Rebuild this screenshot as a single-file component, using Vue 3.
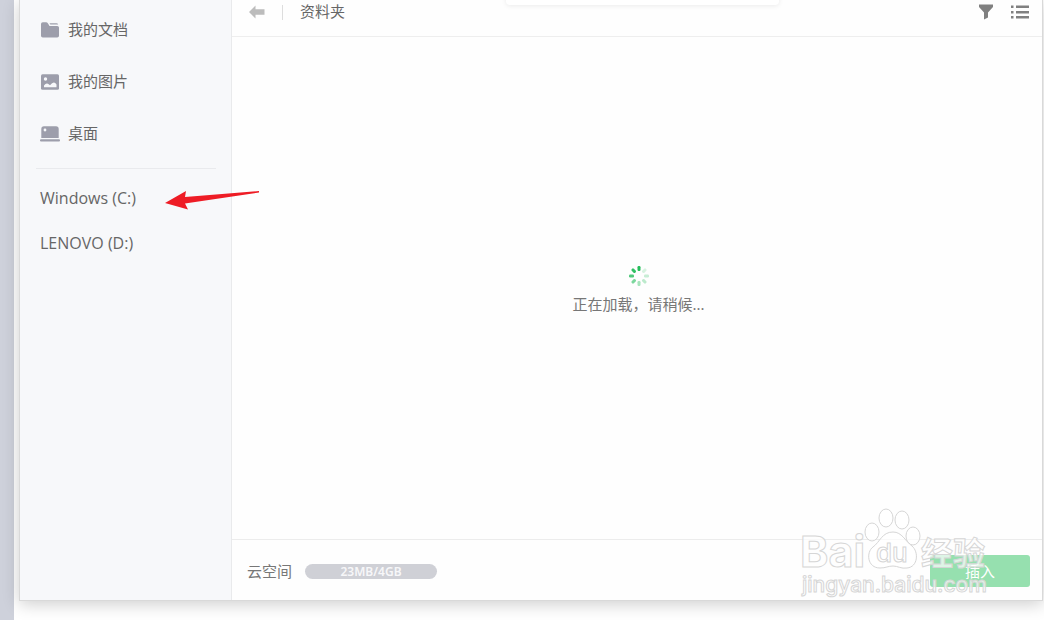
<script setup>
const folders = [
  { name: '我的文档', icon: 'folder' },
  { name: '我的图片', icon: 'picture' },
  { name: '桌面', icon: 'desktop' },
]
const drives = ['Windows (C:)', 'LENOVO (D:)']
const spokes = [1, 0.18, 0.25, 0.3, 0.4, 0.6, 0.8, 0.95]
</script>

<template>
  <div class="page">
    <div class="strip"></div>
    <div class="dialog">
      <nav class="sidebar">
        <button v-for="f in folders" :key="f.name" class="folder" type="button">
          <svg v-if="f.icon === 'folder'" width="20" height="20" viewBox="0 0 20 20" fill="#9d9eab">
            <path d="M1 4Q1 2.300 2.800 2.300H6Q7.200 2.300 8 3.500L9.500 6H17.200Q19 6 19 7.500V15.800Q19 17.500 17.200 17.500H2.800Q1 17.500 1 15.800Z" />
            <path d="M9.500 3.300H16.500Q17.800 3.300 18.200 4.600H10.300Z" />
          </svg>
          <svg v-else-if="f.icon === 'picture'" width="20" height="20" viewBox="0 0 20 20">
            <rect x="1" y="2.300" width="18" height="15.500" rx="1.500" fill="#9d9eab" />
            <circle cx="5.500" cy="7" r="1.700" fill="#f7f8fa" />
            <path d="M4 15.200V13.500Q6.500 10 9 12.500L10 13.200Q14 8 16.500 12.500V15.200Z" fill="#f7f8fa" />
          </svg>
          <svg v-else width="20" height="20" viewBox="0 0 20 20">
            <path d="M1.300 14V5Q1.300 2.300 4 2.300H16Q18.700 2.300 18.700 5V14Z" fill="#9d9eab" />
            <rect y="15.200" width="20" height="2.300" rx="1" fill="#9d9eab" />
            <circle cx="5" cy="6" r="1.400" fill="#f7f8fa" />
          </svg>
          <span class="folder-name">{{ f.name }}</span>
        </button>
        <hr class="divider" />
        <button v-for="d in drives" :key="d" class="drive" type="button">{{ d }}</button>
      </nav>

      <main class="content">
        <header class="toolbar">
          <button class="icon-button" type="button" aria-label="返回">
            <svg width="16" height="14" viewBox="0 0 16 14" fill="#bcbcbc">
              <path d="M0 7L6.500 .5V4.300H15.500V9.700H6.500V13.500Z" />
            </svg>
          </button>
          <span class="separator"></span>
          <span class="crumb">资料夹</span>
          <span class="spacer"></span>
          <button class="icon-button" type="button" aria-label="筛选">
            <svg width="16" height="16" viewBox="0 0 16 16" fill="#808080">
              <path d="M1 .5H15V3L10 8.500V13.500L6 15.500V8.500L1 3Z" />
            </svg>
          </button>
          <button class="icon-button list" type="button" aria-label="列表">
            <svg width="18" height="14" viewBox="0 0 18 14" fill="#808080">
              <path d="M0 .5H2.500V3H0ZM5 .5H18V3H5ZM0 6H2.500V8.500H0ZM5 6H18V8.500H5ZM0 11H2.500V13.500H0ZM5 11H18V13.500H5Z" />
            </svg>
          </button>
        </header>

        <section class="loading" role="status">
          <svg width="22" height="22" viewBox="-11 -11 22 22">
            <rect
              v-for="(opacity, i) in spokes"
              :key="i"
              x="-1.500"
              y="-10"
              width="3"
              height="5"
              rx="1.200"
              fill="#25bd5b"
              :fill-opacity="opacity"
              :transform="`rotate(${i * 45})`"
            />
          </svg>
          <p>正在加载，请稍候...</p>
        </section>

        <footer class="footer">
          <span class="space-label">云空间</span>
          <div class="quota">23MB/4GB</div>
          <span class="spacer"></span>
          <button class="insert" type="button">插入</button>
        </footer>
      </main>
    </div>

    <div class="toast"></div>

    <svg class="pointer" width="96" height="22" viewBox="0 0 96 22">
      <path d="M0 14L21 2L20 8L94 2V3.500L20 14.500L23 20.500Z" fill="#ee1c25" />
    </svg>

    <svg class="watermark" width="200" height="100" viewBox="0 0 200 100">
      <ellipse cx="72" cy="32" rx="7" ry="9" />
      <ellipse cx="86" cy="18" rx="7" ry="9" />
      <ellipse cx="102" cy="20" rx="7" ry="9" />
      <ellipse cx="113" cy="36" rx="7" ry="9" />
      <path d="M93 32C82 32 80 42 73 47C66 52 67 68 80 68C86 68 88 66 93 66C98 66 101 69 107 68C118 67 119 52 112 46C105 41 102 32 93 32Z" />
      <text class="brand" x="0" y="67">Bai</text>
      <text class="du" x="76" y="62">du</text>
      <text class="cjk" x="121" y="65">经验</text>
      <text class="url" x="2" y="92">jingyan.baidu.com</text>
    </svg>
  </div>
</template>

<style>
body {
  margin: 0;
}
</style>

<style scoped>
.page {
  position: relative;
  display: flex;
  height: 100vh;
  box-sizing: border-box;
  padding: 0 1px 19px 0;
  overflow: hidden;
  background: #fff;
  color: #666;
  font-family: "Noto Sans", "Noto Sans CJK SC", sans-serif;
  font-size: 15px;
  line-height: 20px;
}
.strip {
  flex: none;
  width: 14px;
  margin: 0 5px -19px 0;
  background: #ced1db;
}
button {
  margin: 0;
  padding: 0;
  border: 0;
  background: none;
  color: inherit;
  font: inherit;
  cursor: pointer;
}
.dialog {
  flex: 1;
  min-width: 0;
  display: flex;
  border: 1px solid #d9d9d9;
  border-top: 0;
  background: #fefefe;
  box-shadow: 0 3px 16px rgba(0, 0, 0, 0.2);
}
.sidebar {
  flex: none;
  width: 211px;
  padding-top: 4px;
  border-right: 1px solid #e9eaec;
  background: #f7f8fa;
}
.folder {
  display: flex;
  align-items: center;
  gap: 8px;
  width: 100%;
  height: 52px;
  padding-left: 20px;
}
.folder-name,
.crumb {
  padding-bottom: 2px;
}
.divider {
  height: 1px;
  margin: 8px 15px 6px 16px;
  border: 0;
  background: #e9eaed;
}
.drive {
  display: block;
  width: 100%;
  height: 45px;
  padding-left: 20px;
  font-family: "Open Sans", "Noto Sans", sans-serif;
  font-size: 16px;
  text-align: left;
}
.content {
  flex: 1;
  min-width: 0;
  display: flex;
  flex-direction: column;
}
.toolbar {
  display: flex;
  align-items: center;
  height: 24px;
  padding: 0 13px 12px 17px;
  border-bottom: 1px solid #eee;
}
.icon-button {
  display: flex;
}
.separator {
  width: 1px;
  height: 15px;
  margin: 0 17px;
  background: #ddd;
}
.spacer {
  flex: 1;
}
.list {
  margin-left: 17px;
}
.loading {
  flex: 1;
  display: flex;
  flex-direction: column;
  align-items: center;
  justify-content: center;
  padding: 3px 0 0 3px;
  color: #777;
}
.loading p {
  margin: 7px 0 0;
}
.footer {
  display: flex;
  align-items: center;
  height: 58px;
  padding: 2px 12px 0 15px;
  border-top: 1px solid #ececec;
}
.space-label {
  color: #777;
}
.quota {
  width: 132px;
  height: 15px;
  margin-left: 13px;
  border-radius: 8px;
  background: #cfd0d6;
  color: #f7f7f9;
  font-size: 12px;
  font-weight: 600;
  line-height: 15px;
  text-align: center;
}
.insert {
  width: 100px;
  height: 32px;
  border-radius: 3px;
  background: #96e0af;
  color: #fff;
}
.toast {
  position: absolute;
  top: -20px;
  left: 506px;
  right: 265px;
  height: 25px;
  border-radius: 4px;
  background: #fff;
  box-shadow: 0 1px 5px rgba(0, 0, 0, 0.08);
}
.pointer {
  position: absolute;
  top: 189px;
  left: 165px;
}
.watermark {
  position: absolute;
  right: 44px;
  bottom: 20px;
  pointer-events: none;
  fill: #fff;
  fill-opacity: 0.7;
  stroke: #d6d6d6;
  stroke-width: 1;
}
.watermark text {
  font-family: Inter, "Noto Sans CJK SC", sans-serif;
}
.watermark .brand {
  font-size: 43px;
  font-weight: 700;
}
.watermark .du {
  font-size: 26px;
  font-weight: 500;
}
.watermark .cjk {
  font-size: 32px;
  font-weight: 700;
}
.watermark .url {
  font-size: 21px;
  font-weight: 500;
}
</style>
